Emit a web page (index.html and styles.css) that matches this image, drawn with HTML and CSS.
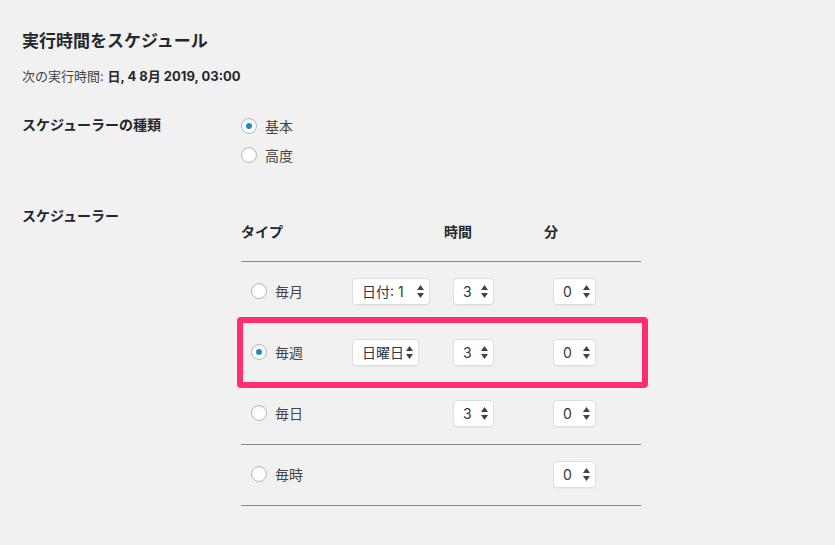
FILE: index.html
```html
<!DOCTYPE html>
<html lang="ja">
<head>
<meta charset="utf-8">
<title>実行時間をスケジュール</title>
<link rel="stylesheet" href="styles.css">
</head>
<body>
<div class="wrap">
  <h2 class="title">実行時間をスケジュール</h2>
  <p class="next">次の実行時間: <strong>日, 4 8月 2019, 03:00</strong></p>

  <div class="form-row type-row">
    <div class="th">スケジューラーの種類</div>
    <div class="td radios">
      <label class="radio-item"><span class="radio checked"></span>基本</label>
      <label class="radio-item"><span class="radio"></span>高度</label>
    </div>
  </div>

  <div class="form-row sched-form">
    <div class="th">スケジューラー</div>
    <div class="sched">
      <div class="sched-head">
        <div class="hcell">タイプ</div>
        <div class="hcell"></div>
        <div class="hcell">時間</div>
        <div class="hcell">分</div>
      </div>

      <div class="sched-row">
        <div class="cell"><label class="radio-item"><span class="radio"></span>毎月</label></div>
        <div class="cell"><span class="select sel-date">日付: 1<svg class="arr" viewBox="0 0 7 13"><path d="M3.5 0L7 5H0z"/><path d="M0 8h7L3.5 13z"/></svg></span></div>
        <div class="cell"><span class="select sel-hour">3<svg class="arr" viewBox="0 0 7 13"><path d="M3.5 0L7 5H0z"/><path d="M0 8h7L3.5 13z"/></svg></span></div>
        <div class="cell"><span class="select sel-min">0<svg class="arr" viewBox="0 0 7 13"><path d="M3.5 0L7 5H0z"/><path d="M0 8h7L3.5 13z"/></svg></span></div>
      </div>

      <div class="sched-row highlighted">
        <div class="cell"><label class="radio-item"><span class="radio checked"></span>毎週</label></div>
        <div class="cell"><span class="select sel-week">日曜日<svg class="arr" viewBox="0 0 7 13"><path d="M3.5 0L7 5H0z"/><path d="M0 8h7L3.5 13z"/></svg></span></div>
        <div class="cell"><span class="select sel-hour">3<svg class="arr" viewBox="0 0 7 13"><path d="M3.5 0L7 5H0z"/><path d="M0 8h7L3.5 13z"/></svg></span></div>
        <div class="cell"><span class="select sel-min">0<svg class="arr" viewBox="0 0 7 13"><path d="M3.5 0L7 5H0z"/><path d="M0 8h7L3.5 13z"/></svg></span></div>
        <div class="highlight-box"></div>
      </div>

      <div class="sched-row">
        <div class="cell"><label class="radio-item"><span class="radio"></span>毎日</label></div>
        <div class="cell"></div>
        <div class="cell"><span class="select sel-hour">3<svg class="arr" viewBox="0 0 7 13"><path d="M3.5 0L7 5H0z"/><path d="M0 8h7L3.5 13z"/></svg></span></div>
        <div class="cell"><span class="select sel-min">0<svg class="arr" viewBox="0 0 7 13"><path d="M3.5 0L7 5H0z"/><path d="M0 8h7L3.5 13z"/></svg></span></div>
      </div>

      <div class="sched-row">
        <div class="cell"><label class="radio-item"><span class="radio"></span>毎時</label></div>
        <div class="cell"></div>
        <div class="cell"></div>
        <div class="cell"><span class="select sel-min">0<svg class="arr" viewBox="0 0 7 13"><path d="M3.5 0L7 5H0z"/><path d="M0 8h7L3.5 13z"/></svg></span></div>
      </div>
    </div>
  </div>
</div>
</body>
</html>
```

FILE: styles.css
```css
html, body {
  margin: 0;
  padding: 0;
  background: #f1f1f1;
}

body {
  font-family: Inter, "Noto Sans CJK JP", sans-serif;
  color: #23282d;
  font-size: 14px;
}

.wrap {
  padding-left: 22px;
  padding-top: 29px;
}

.title {
  margin: 0;
  font-size: 17px;
  line-height: 24px;
  font-weight: 700;
  color: #23282d;
}

.next {
  margin: 13px 0 0;
  font-size: 13px;
  line-height: 20px;
  color: #444;
}

.next strong {
  color: #23282d;
  font-weight: 700;
}

.form-row {
  display: grid;
  grid-template-columns: 219px 400px;
}

.th {
  font-weight: 700;
  font-size: 14px;
  line-height: 20px;
  color: #23282d;
}

.type-row {
  margin-top: 25px;
}

.type-row .th {
  padding-top: 4px;
}

.radios {
  display: flex;
  flex-direction: column;
}

.radio-item {
  display: flex;
  align-items: center;
  gap: 8px;
  height: 29px;
  font-size: 14px;
  color: #444;
}

.radio {
  box-sizing: border-box;
  width: 16px;
  height: 16px;
  border: 1px solid #b4b9be;
  border-radius: 50%;
  background: #fff;
  box-shadow: inset 0 1px 2px rgba(0, 0, 0, 0.07);
  display: flex;
  align-items: center;
  justify-content: center;
  flex: none;
}

.radio.checked::before {
  content: "";
  width: 6px;
  height: 6px;
  border-radius: 50%;
  background: #1e8cbe;
}

.sched-form {
  margin-top: 37px;
}

.sched-head {
  display: grid;
  grid-template-columns: 101px 101px 100px 98px;
  padding: 16px 0 19px;
  border-bottom: 1px solid #888;
  font-weight: 700;
  line-height: 20px;
  color: #23282d;
}

.hcell:nth-child(3),
.hcell:nth-child(4) {
  padding-left: 1px;
}

.sched-row {
  position: relative;
  box-sizing: border-box;
  display: grid;
  grid-template-columns: 101px 101px 100px 98px;
  height: 61px;
  padding-bottom: 2px;
  align-items: center;
  border-bottom: 1px solid #888;
}

.sched-row .cell {
  padding-left: 10px;
  display: flex;
  align-items: center;
}

.select {
  box-sizing: border-box;
  height: 27px;
  display: flex;
  align-items: center;
  justify-content: space-between;
  padding: 0 5px 0 9px;
  background: #fff;
  border: 1px solid #ddd;
  border-radius: 4px;
  font-size: 14px;
  color: #32373c;
  box-shadow: 0 1px 1px rgba(0, 0, 0, 0.04);
}

.sel-date { width: 78px; }
.sel-week { width: 67px; }
.sel-hour { width: 41px; }
.sel-min  { width: 43px; }

.arr {
  width: 7px;
  height: 13px;
  fill: #3c434a;
  flex: none;
}

.highlight-box {
  position: absolute;
  top: -6px;
  left: -4px;
  right: -7px;
  bottom: -5px;
  border: 6px solid #ff2e6f;
  border-radius: 4px;
  pointer-events: none;
}
```
